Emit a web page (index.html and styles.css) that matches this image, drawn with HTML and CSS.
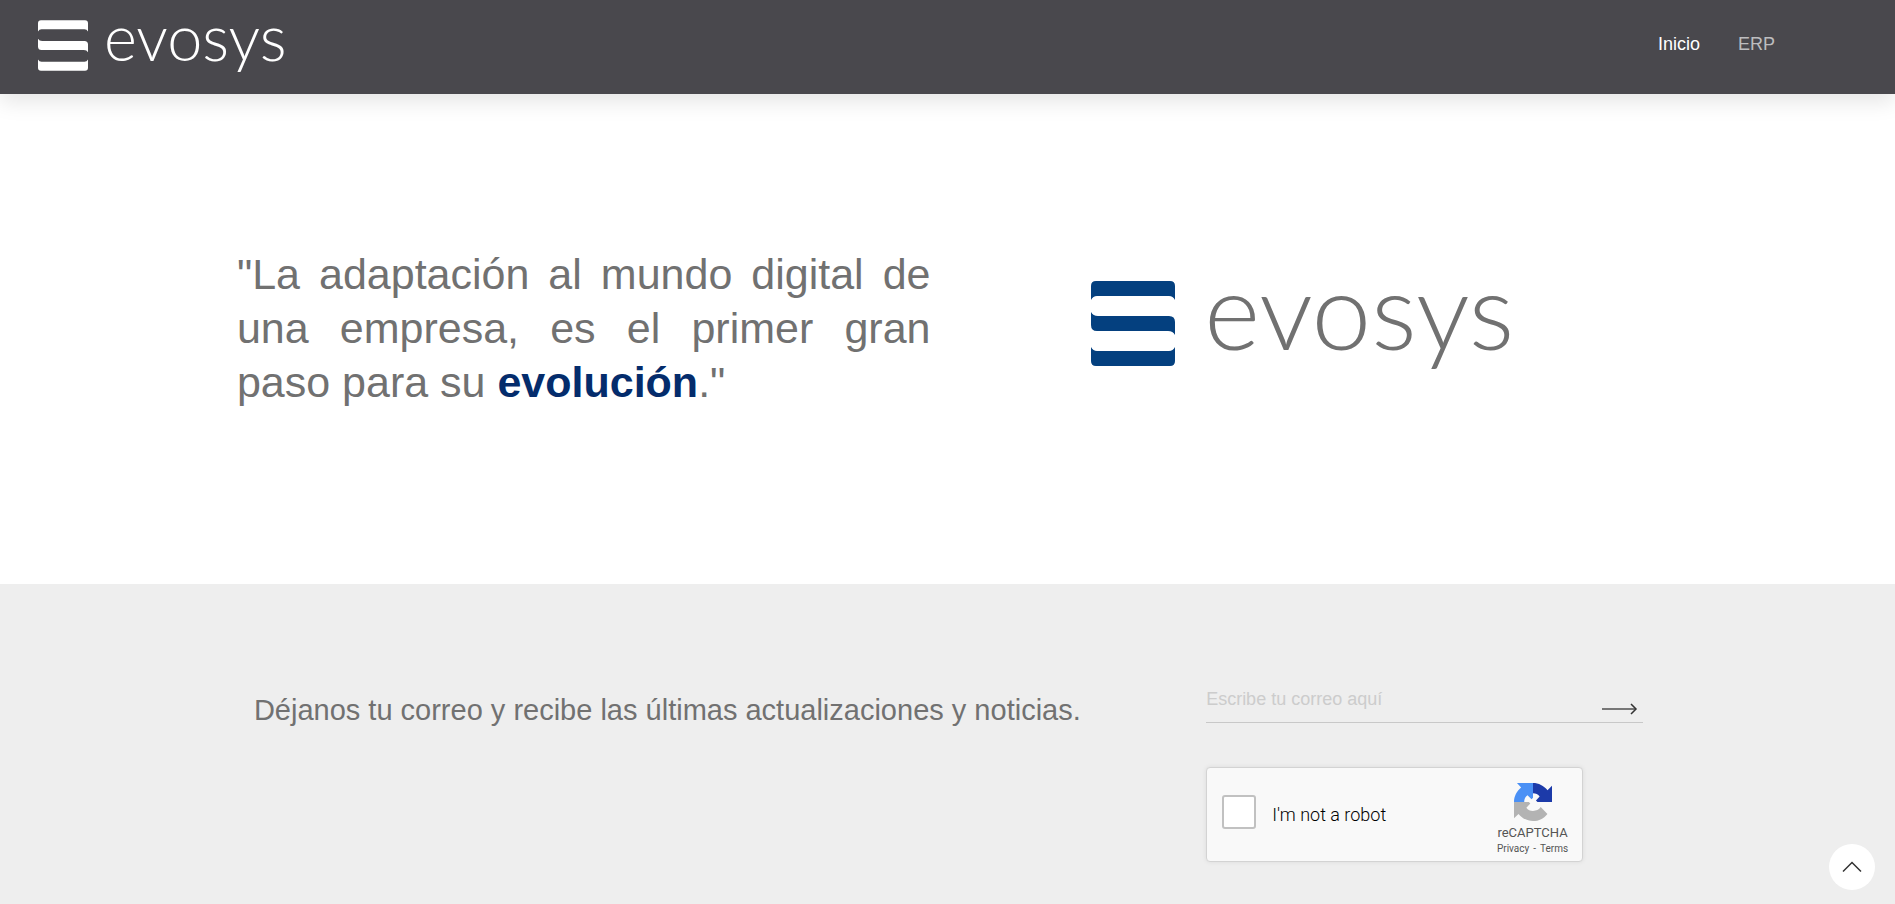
FILE: index.html
```html
<!DOCTYPE html>
<html lang="es">
<head>
<meta charset="utf-8">
<meta name="viewport" content="width=device-width, initial-scale=1">
<title>evosys</title>
<link rel="stylesheet" href="styles.css">
</head>
<body>
<svg class="sprite" aria-hidden="true">
  <symbol id="mark" viewBox="0 0 84 85">
    <path d="M0 19V5Q0 0 5 0H79Q84 0 84 5V19Q82 15 78 15H6Q2 15 0 19Z"/>
    <path d="M0 31Q2 35 7 35H78Q84 35 84 41V54Q82 50 77 50H6Q0 50 0 44Z"/>
    <path d="M0 66Q2 70 6 70H78Q82 70 84 66V80Q84 85 79 85H5Q0 85 0 80Z"/>
  </symbol>
</svg>

<header class="topbar">
  <a class="brand" href="#" aria-label="evosys">
    <svg class="brand-mark"><use href="#mark"/></svg>
    <span class="brand-name">evosys</span>
  </a>
  <nav class="menu">
    <a class="menu-link is-active" href="#">Inicio</a>
    <a class="menu-link" href="#">ERP</a>
  </nav>
</header>

<main class="hero">
  <p class="quote">"La adaptación al mundo digital de una empresa, es el primer gran paso para su <strong class="accent">evolución</strong>."</p>
  <div class="hero-logo">
    <svg class="hero-mark" aria-hidden="true"><use href="#mark"/></svg>
    <span class="hero-name">evosys</span>
  </div>
</main>

<section class="subscribe">
  <p class="subscribe-text">Déjanos tu correo y recibe las últimas actualizaciones y noticias.</p>
  <form class="subscribe-form">
    <div class="field">
      <input class="field-input" type="email" placeholder="Escribe tu correo aquí" aria-label="Correo">
      <button class="field-send" type="button" aria-label="Enviar">
        <svg class="arrow" viewBox="0 0 36 12"><path class="arrow-line" d="M0 6H33"/><path class="arrow-head" d="M29 1l5 5-5 5"/></svg>
      </button>
    </div>
    <div class="captcha">
      <input class="captcha-box" id="robot" type="checkbox">
      <label class="captcha-label" for="robot">I'm not a robot</label>
      <div class="captcha-side">
        <svg class="captcha-logo" viewBox="0 0 64 64" aria-hidden="true">
          <path fill="#1c3aa9" d="M64 32V4.500l-7.600 7.600C50.200 4.500 41.500 0 32 0V17.200C36.800 17.200 40.500 19 43.200 22.800L37 29.500 39.500 32Z"/>
          <path fill="#4a90f5" d="M32 0H5L12 7.600C4.500 13.800 0 22.500 0 32H17.200C17.200 27.200 19 23.500 22.800 20.800L29.500 27.500 32 25Z"/>
          <path fill="#b3b3b3" d="M0 32V59.500L7.600 52C13.800 59.500 22.500 64 32 64 42 64 50.500 59.400 56.300 52L45 40.500C42 44.800 37.500 47 32 47 27 47 23.500 45 20.800 41.500L27.500 34.500 25 32Z"/>
        </svg>
        <span class="captcha-name">reCAPTCHA</span>
        <span class="captcha-links"><a href="#">Privacy</a><span>-</span><a href="#">Terms</a></span>
      </div>
    </div>
  </form>
</section>

<button class="to-top" type="button" aria-label="Subir">
  <svg class="chevron" viewBox="0 0 20 12"><path d="M1 10.500L10 1.500l9 9"/></svg>
</button>
</body>
</html>
```

FILE: styles.css
```css
* { box-sizing: border-box; }

body {
  margin: 0;
  min-height: 100vh;
  display: flex;
  flex-direction: column;
  background: #fff;
  color: #717171;
  font-family: "Liberation Sans", Arial, sans-serif;
}

p { margin: 0; }
a { color: inherit; text-decoration: none; }
.sprite { position: absolute; width: 0; height: 0; }

.topbar {
  position: relative;
  display: flex;
  justify-content: space-between;
  padding: 20px 120px 23px 38px;
  background: #49484d;
  box-shadow: 0 8px 20px rgba(0, 0, 0, 0.1);
}
.brand { display: flex; align-items: flex-start; gap: 16px; color: #fff; }
.brand-mark { width: 50px; height: 51px; fill: currentColor; }
.brand-name { font: 300 63px/34px Lato, sans-serif; }
.menu { display: flex; gap: 38px; padding-top: 13px; }
.menu-link { font-size: 18px; line-height: 22px; color: #bdbdbf; }
.menu-link.is-active { color: #fff; }

.hero {
  display: grid;
  grid-template-columns: 1fr 1fr;
  align-items: start;
  padding: 153px 12.5% 175px;
}
.quote {
  padding-right: 17px;
  font-size: 43px;
  line-height: 54px;
  text-align: justify;
}
.accent { color: #042c6c; }
.hero-logo {
  display: flex;
  align-items: flex-start;
  justify-content: center;
  gap: 29px;
  padding-top: 34px;
}
.hero-mark { width: 84px; height: 85px; fill: #04407f; }
.hero-name { font: 300 107px/56px Lato, sans-serif; }

.subscribe {
  flex: 1;
  display: flex;
  justify-content: space-between;
  gap: 32px;
  padding: 96px calc(12.5% + 15px) 40px;
  background: #eee;
}
.subscribe-text {
  padding: 12px 0 0 2px;
  font-size: 29px;
  line-height: 36px;
}
.subscribe-form { flex: 0 1 437px; }
.field {
  display: flex;
  height: 43px;
  border-bottom: 1px solid #c8c8c8;
}
.field-input {
  flex: 1;
  min-width: 0;
  padding: 0 0 4px;
  border: 0;
  background: none;
  font: 18px "Liberation Sans", Arial, sans-serif;
}
.field-input::placeholder { color: #ccc; }
.field-send { display: flex; padding: 23px 5px 0 0; border: 0; background: none; }
.arrow { width: 36px; height: 12px; fill: none; }
.arrow-line { stroke: #777; stroke-width: 2; }
.arrow-head { stroke: #333; stroke-width: 1.5; }

.captcha {
  display: flex;
  align-items: center;
  width: 377px;
  height: 95px;
  margin-top: 44px;
  padding: 0 14px 0 15px;
  border: 1px solid #d3d3d3;
  border-radius: 4px;
  background: #f9f9f9;
  box-shadow: 0 0 5px rgba(0, 0, 0, 0.08);
  font-family: Roboto, sans-serif;
}
.captcha-box {
  appearance: none;
  width: 34px;
  height: 34px;
  margin: 0 16px 6px 0;
  border: 2px solid #c1c1c1;
  border-radius: 3px;
  background: #fff;
}
.captcha-label { flex: 1; font-size: 18px; font-weight: 300; color: #000; }
.captcha-side {
  display: flex;
  flex-direction: column;
  align-items: center;
  padding-top: 10px;
  color: #555;
}
.captcha-logo { width: 38px; height: 38px; }
.captcha-name { margin-top: 4px; font-size: 13px; line-height: 16px; }
.captcha-links { display: flex; gap: 4px; font-size: 10px; line-height: 16px; }

.to-top {
  position: fixed;
  right: 20px;
  bottom: 14px;
  display: flex;
  align-items: center;
  justify-content: center;
  width: 46px;
  height: 46px;
  padding: 0;
  border: 0;
  border-radius: 50%;
  background: #fff;
}
.chevron { width: 20px; height: 12px; fill: none; stroke: #333; stroke-width: 1.5; }
```
